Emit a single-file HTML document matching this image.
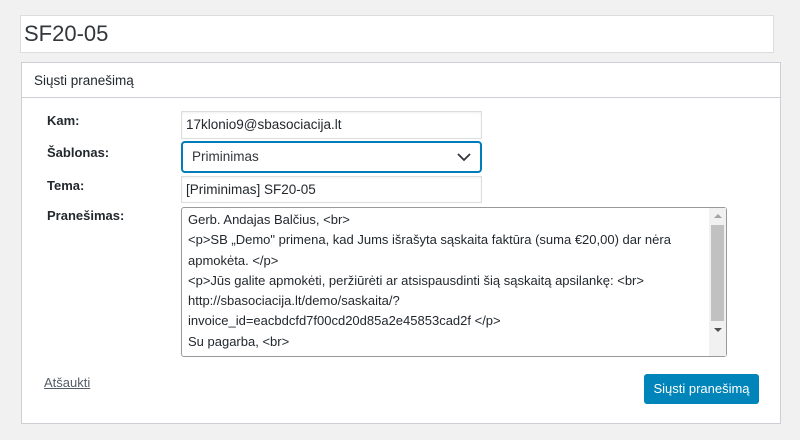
<!DOCTYPE html>
<html><head><style>
body{margin:0;background:#f1f1f1;width:800px;height:440px;position:relative;font-family:"Liberation Sans",sans-serif;color:#23282d;overflow:hidden}
.abs{position:absolute;box-sizing:border-box}
.title{left:20px;top:15px;width:754px;height:38px;background:#fff;border:1px solid #ddd;font-size:22px;padding:5px 0 0 3px;color:#32373c}
.panel{left:21px;top:62px;width:760px;height:362px;background:#fff;border:1px solid #ccd0d4}
.hdr{left:21px;top:62px;width:760px;height:36px;border:1px solid #ccd0d4;font-size:13.5px;padding:10px 0 0 12px}
.lbl{left:47px;font-size:13px;font-weight:bold}
.inp{left:181px;width:301px;background:#fff;border:1px solid #ddd;font-size:13.5px;padding:5px 0 0 4px;box-shadow:inset 0 1px 2px rgba(0,0,0,.07)}
.sel{left:181px;top:141px;width:301px;height:32px;border:2px solid #007cba;border-radius:4px;background:#fff;font-size:13.5px;padding:6px 0 0 9px;color:#32373c}
.ta{left:181px;top:207px;width:546px;height:150px;border:1px solid #999;border-radius:3px;background:#fff;overflow:hidden;font-size:13px;line-height:20.3px;padding:2px 0 0 6px}
.sb{left:709px;top:208px;width:17px;height:148px;background:#f1f1f1}
.btn{left:644px;top:374px;width:115px;height:30px;background:#0085ba;border-radius:3px;color:#fff;font-size:13px;text-align:center;line-height:30px}
</style></head><body>
<div class="abs title">SF20-05</div>
<div class="abs panel"></div>
<div class="abs hdr">Siųsti pranešimą</div>
<div class="abs lbl" style="top:113px">Kam:</div>
<div class="abs lbl" style="top:145px">Šablonas:</div>
<div class="abs lbl" style="top:178px">Tema:</div>
<div class="abs lbl" style="top:208px">Pranešimas:</div>
<div class="abs inp" style="top:111px;height:28px">17klonio9@sbasociacija.lt</div>
<div class="abs sel">Priminimas<svg style="position:absolute;right:9px;top:9px" width="14" height="10" viewBox="0 0 14 10"><path d="M1 2l6 6 6-6" fill="none" stroke="#32373c" stroke-width="1.8"/></svg></div>
<div class="abs inp" style="top:176px;height:27px">[Priminimas] SF20-05</div>
<div class="abs ta">Gerb. Andajas Balčius, &lt;br&gt;<br>&lt;p&gt;SB „Demo" primena, kad Jums išrašyta sąskaita faktūra (suma €20,00) dar nėra<br>apmokėta. &lt;/p&gt;<br>&lt;p&gt;Jūs galite apmokėti, peržiūrėti ar atsispausdinti šią sąskaitą apsilankę: &lt;br&gt;<br>http://sbasociacija.lt/demo/saskaita/?<br>invoice_id=eacbdcfd7f00cd20d85a2e45853cad2f &lt;/p&gt;<br>Su pagarba, &lt;br&gt;<br>SB „Demo" ...</div>
<div class="abs sb"><div style="position:absolute;left:2px;top:17px;width:13px;height:96px;background:#c1c1c1"></div><div style="position:absolute;left:5px;top:6px;border:4px solid transparent;border-bottom:4px solid #a3a3a3;border-top:0"></div><div style="position:absolute;left:5px;top:120px;border:4px solid transparent;border-top:4px solid #505050;border-bottom:0"></div></div>
<div class="abs" style="left:44px;top:375px;font-size:13px;color:#555d66;text-decoration:underline">Atšaukti</div>
<div class="abs btn">Siųsti pranešimą</div>
</body></html>
